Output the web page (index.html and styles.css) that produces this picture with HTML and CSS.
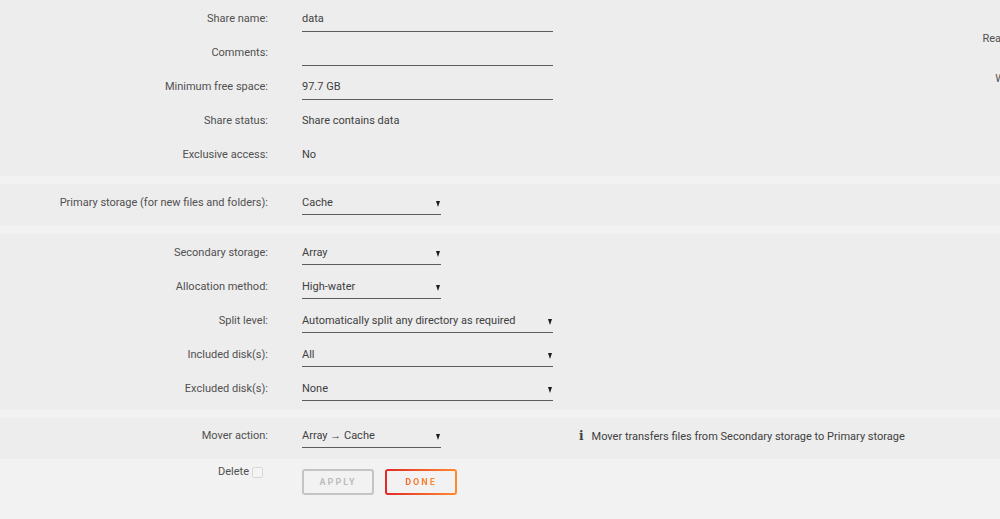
FILE: index.html
```html
<!DOCTYPE html>
<html lang="en">
<head>
  <meta charset="UTF-8">
  <title>Share Settings</title>
  <link rel="stylesheet" href="styles.css">
</head>
<body>
<form class="share-form">

  <section class="block block-main">
    <div class="form-col">
      <div class="row">
        <label class="label">Share name:</label>
        <input class="field" type="text" value="data">
      </div>
      <div class="row">
        <label class="label">Comments:</label>
        <input class="field" type="text" value="">
      </div>
      <div class="row">
        <label class="label">Minimum free space:</label>
        <input class="field" type="text" value="97.7 GB">
      </div>
      <div class="row">
        <label class="label">Share status:</label>
        <span class="value">Share contains data</span>
      </div>
      <div class="row">
        <label class="label">Exclusive access:</label>
        <span class="value">No</span>
      </div>
    </div>
    <div class="side-col">
      <div class="side-row">Read settings from:</div>
      <div class="side-row">Write settings to:</div>
    </div>
  </section>

  <section class="block">
    <div class="row">
      <label class="label">Primary storage (for new files and folders):</label>
      <div class="select short">
        <select><option>Cache</option></select>
      </div>
    </div>
  </section>

  <section class="block block-storage">
    <div class="row">
      <label class="label">Secondary storage:</label>
      <div class="select short">
        <select><option>Array</option></select>
      </div>
    </div>
    <div class="row">
      <label class="label">Allocation method:</label>
      <div class="select short">
        <select><option>High-water</option></select>
      </div>
    </div>
    <div class="row">
      <label class="label">Split level:</label>
      <div class="select">
        <select><option>Automatically split any directory as required</option></select>
      </div>
    </div>
    <div class="row">
      <label class="label">Included disk(s):</label>
      <div class="select">
        <select><option>All</option></select>
      </div>
    </div>
    <div class="row">
      <label class="label">Excluded disk(s):</label>
      <div class="select">
        <select><option>None</option></select>
      </div>
    </div>
  </section>

  <section class="block block-mover">
    <div class="row">
      <label class="label">Mover action:</label>
      <div class="field-wrap">
        <div class="select short">
          <select><option>Array → Cache</option></select>
        </div>
      </div>
      <span class="info"><b class="info-icon">i</b>Mover transfers files from Secondary storage to Primary storage</span>
    </div>
  </section>

  <div class="actions">
    <label class="label delete">Delete <input type="checkbox" class="check"></label>
    <div class="buttons">
      <button type="button" class="btn btn-apply" disabled>Apply</button>
      <button type="button" class="btn btn-done"><span>Done</span></button>
    </div>
  </div>

</form>
</body>
</html>
```

FILE: styles.css
```css
html, body {
  overflow: hidden;
}
body {
  margin: 0;
  background: #f2f2f2;
  color: #404040;
  font-family: Roboto, "Open Sans", sans-serif;
  font-size: 11px;
}
.block {
  background: #ededed;
  padding: 1px 0 7px;
  margin-bottom: 8px;
}
.block-main {
  display: flex;
  padding-bottom: 5px;
}
.block-storage {
  padding-bottom: 5px;
}
.block-mover {
  padding-top: 0;
  margin-bottom: 0;
}
.form-col {
  flex: none;
  width: 720px;
}
.side-col {
  flex: none;
  width: 358px;
  text-align: right;
  padding-top: 31px;
  color: #505050;
}
.side-row {
  height: 40px;
}
.row {
  display: flex;
  align-items: flex-start;
  height: 34px;
  padding-top: 6px;
  box-sizing: border-box;
}
.label {
  flex: none;
  width: 268px;
  margin-right: 34px;
  text-align: right;
  color: #505050;
  padding-top: 5px;
  line-height: 14px;
}
.value {
  padding-top: 5px;
  line-height: 14px;
}
.field {
  width: 251px;
  box-sizing: border-box;
  padding: 5px 0 5px;
  margin: 0;
  border: none;
  border-bottom: 1px solid #5c5c5c;
  background: transparent;
  font: inherit;
  line-height: 14px;
  color: #404040;
  outline: none;
}
.select {
  position: relative;
  width: 251px;
}
.select.short {
  width: 139px;
}
.select select {
  appearance: none;
  -webkit-appearance: none;
  width: 100%;
  box-sizing: border-box;
  padding: 5px 12px 4px 0;
  margin: 0;
  border: none;
  border-bottom: 1px solid #5c5c5c;
  border-radius: 0;
  background: transparent;
  font: inherit;
  line-height: 14px;
  color: #404040;
}
.select::after {
  content: "";
  position: absolute;
  right: 1px;
  top: 10px;
  border-left: 2.5px solid transparent;
  border-right: 2.5px solid transparent;
  border-top: 6px solid #1c1c1c;
}
.field-wrap {
  flex: none;
  width: 251px;
}
.info {
  margin-left: 26px;
  padding-top: 5px;
  line-height: 14px;
}
.info-icon {
  font-family: "DejaVu Serif", serif;
  font-weight: bold;
  font-size: 12px;
  margin-right: 8px;
}
.actions {
  display: flex;
  align-items: flex-start;
  padding-top: 6px;
}
.delete {
  display: flex;
  justify-content: flex-end;
  align-items: center;
  gap: 3px;
  padding-top: 0;
}
.check {
  appearance: none;
  -webkit-appearance: none;
  width: 11px;
  height: 11px;
  margin: 0 5px 0 0;
  border: 1px solid #d8d8d8;
  border-radius: 2px;
  background: #f4f4f4;
}
.buttons {
  display: flex;
  gap: 11px;
  padding-top: 4px;
}
.btn {
  width: 72px;
  height: 26px;
  padding: 0;
  border-radius: 3px;
  background: transparent;
  font-family: inherit;
  font-size: 9px;
  font-weight: bold;
  letter-spacing: 2px;
  text-transform: uppercase;
}
.btn-apply {
  border: 2px solid #c4c4c4;
  color: #bdbdbd;
}
.btn-done {
  border: 2px solid transparent;
  background: linear-gradient(#f2f2f2, #f2f2f2) padding-box,
              linear-gradient(90deg, #e22828, #ff8c2f) border-box;
  cursor: pointer;
}
.btn-done span {
  background: linear-gradient(90deg, #f26a2a, #ff8c2f);
  -webkit-background-clip: text;
  background-clip: text;
  color: transparent;
}
```
